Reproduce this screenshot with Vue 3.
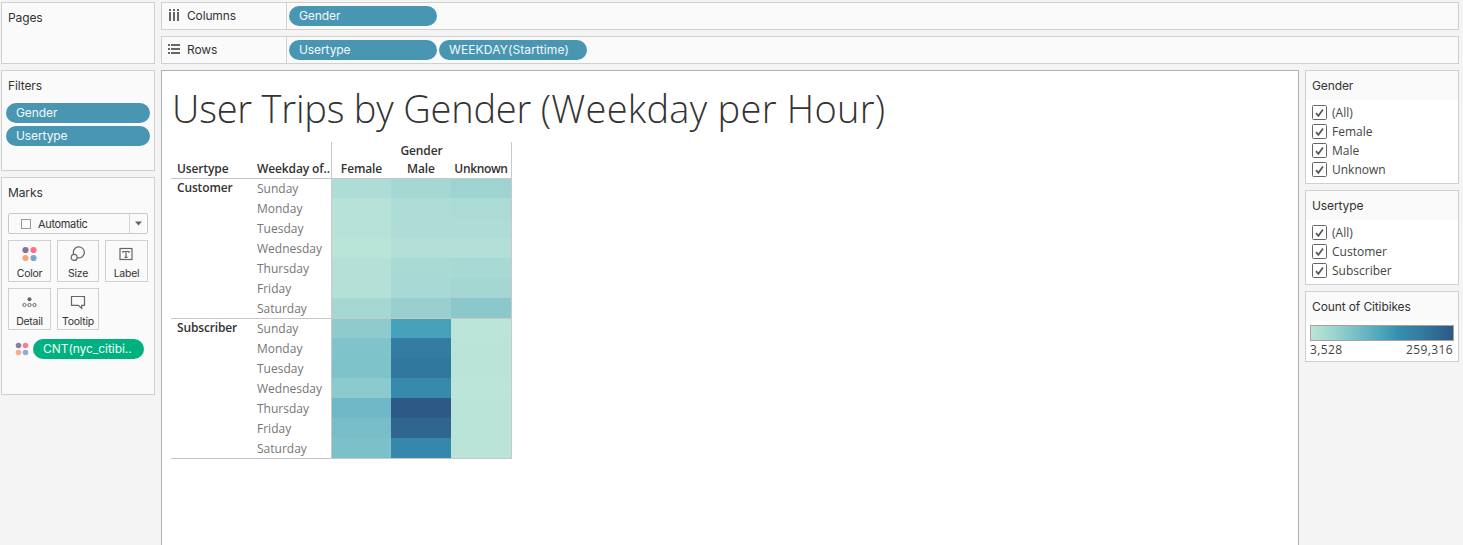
<script setup>
const marks = ['Color', 'Size', 'Label', 'Detail', 'Tooltip']
const days = ['Sunday', 'Monday', 'Tuesday', 'Wednesday', 'Thursday', 'Friday', 'Saturday']
const groups = [
  {
    name: 'Customer',
    rows: [
      ['#aedcd6', '#a5d8d3', '#9dd4d1'],
      ['#b7e2d8', '#aedcd6', '#acdbd5'],
      ['#b7e2d8', '#afdcd6', '#aedcd6'],
      ['#b9e4d8', '#b3dfd7', '#b3dfd7'],
      ['#b4e0d7', '#a9dad4', '#a8d9d4'],
      ['#b4e0d7', '#a8d9d4', '#a4d7d3'],
      ['#a5d8d3', '#99d0cf', '#8bc8cc']
    ]
  },
  {
    name: 'Subscriber',
    rows: [
      ['#8fcbcd', '#46a2bb', '#bbe5d9'],
      ['#80c3ca', '#347ca2', '#bae4d8'],
      ['#7fc3ca', '#32779e', '#bae4d8'],
      ['#8dcacd', '#368bac', '#bbe5d9'],
      ['#6fb8c7', '#2c5985', '#b9e4d7'],
      ['#78bec8', '#2f6690', '#b9e4d7'],
      ['#7cc0c9', '#3588ab', '#bae4d8']
    ]
  }
]
const filters = [
  { title: 'Gender', items: ['(All)', 'Female', 'Male', 'Unknown'] },
  { title: 'Usertype', items: ['(All)', 'Customer', 'Subscriber'] }
]
</script>

<template>
  <div class="app">
    <aside class="left">
      <section class="panel pages"><h3>Pages</h3></section>
      <section class="panel filters">
        <h3>Filters</h3>
        <div class="pill">Gender</div>
        <div class="pill">Usertype</div>
      </section>
      <section class="panel marks">
        <h3>Marks</h3>
        <div class="select">
          <i class="square"></i><span>Automatic</span>
          <b><svg width="7" height="5" viewBox="0 0 7 5"><path d="M0 .5h7L3.5 4.5z" fill="#666" /></svg></b>
        </div>
        <div class="buttons">
          <div v-for="m in marks" :key="m" class="mark">
            <svg width="24" height="20" viewBox="0.5 0 24 20" fill="none" stroke="#666" stroke-width="1.2">
              <g v-if="m === 'Color'" stroke="none">
                <circle cx="8" cy="6" r="3.1" fill="#86709c" /><circle cx="16" cy="6" r="3.1" fill="#ff6f83" />
                <circle cx="8" cy="14" r="3.1" fill="#f7a87a" /><circle cx="16" cy="14" r="3.1" fill="#7fa5cd" />
              </g>
              <g v-else-if="m === 'Size'">
                <path d="M8.2 10.4A5.5 5.5 0 1 1 11.6 13.6" /><circle cx="8.7" cy="13.4" r="3" />
              </g>
              <g v-else-if="m === 'Label'">
                <rect x="5.5" y="4.5" width="12" height="11" />
                <path d="M8.5 9V7.5h6V9M11.5 7.5v6M10 13.4h3" />
              </g>
              <g v-else-if="m === 'Detail'">
                <circle cx="12" cy="7.2" r="2" fill="#666" stroke="none" />
                <circle cx="7" cy="13" r="1.6" stroke-width="1" /><circle cx="12" cy="13" r="1.6" stroke-width="1" /><circle cx="17" cy="13" r="1.6" stroke-width="1" />
              </g>
              <path v-else d="M6 4.5h13v8.8h-2.8v3l-3.4-3H6z" />
            </svg>
            <span>{{ m }}</span>
          </div>
        </div>
        <div class="encoding">
          <svg width="14" height="14" viewBox="0 0 14 14">
            <circle cx="3.5" cy="3.5" r="2.8" fill="#8e7ba2" /><circle cx="10.5" cy="3.5" r="2.8" fill="#f87e8f" />
            <circle cx="3.5" cy="10.5" r="2.8" fill="#f5b08a" /><circle cx="10.5" cy="10.5" r="2.8" fill="#8dafd2" />
          </svg>
          <div class="pill green">CNT(nyc_citibi..</div>
        </div>
      </section>
    </aside>

    <main class="main">
      <div class="shelf">
        <div class="label">
          <svg width="12" height="14" viewBox="0 0 12 14" fill="#666">
            <path d="M1 0h2v2H1zM5 0h2v2H5zM9 0h2v2H9zM1 3h2v9H1zM5 3h2v9H5zM9 3h2v9H9z" />
          </svg>
          <span class="cols">Columns</span>
        </div>
        <div class="pill">Gender</div>
      </div>
      <div class="shelf">
        <div class="label">
          <svg width="12" height="14" viewBox="0 0 12 14" fill="#666">
            <path d="M0 1h2v2H0zM0 5h2v2H0zM0 9h2v2H0zM3 1h9v2H3zM3 5h9v2H3zM3 9h9v2H3z" />
          </svg>
          <span>Rows</span>
        </div>
        <div class="pill">Usertype</div>
        <div class="pill wk">WEEKDAY(Starttime)</div>
      </div>
      <div class="work">
        <div class="canvas">
          <h1><span class="tight">User Trips by Gender </span><span class="loose">(Weekday per Hour)</span></h1>
          <div class="table">
            <div class="thead">
              <div class="h1c">Usertype</div>
              <div class="h2c">Weekday of..</div>
              <div class="h3c">
                <div class="gender">Gender</div>
                <div class="names"><span>Female</span><span>Male</span><span class="unk">Unknown</span></div>
              </div>
            </div>
            <div v-for="g in groups" :key="g.name" class="group">
              <div class="gname">{{ g.name }}</div>
              <div class="days"><div v-for="d in days" :key="d">{{ d }}</div></div>
              <div class="heat">
                <div v-for="(r, i) in g.rows" :key="i" class="hrow">
                  <i v-for="(c, j) in r" :key="j" :style="{ background: c }"></i>
                </div>
              </div>
            </div>
          </div>
        </div>
        <aside class="right">
          <section v-for="f in filters" :key="f.title" class="card">
            <h3>{{ f.title }}</h3>
            <div class="list">
              <div v-for="t in f.items" :key="t" class="check">
                <svg width="15" height="15" viewBox="0 0 15 15" fill="none">
                  <rect x=".5" y=".5" width="14" height="14" rx="1" stroke="#666" />
                  <path d="M4 8.2l2.4 2.6L11 4.6" stroke="#555" stroke-width="1.7" />
                </svg>
                <span>{{ t }}</span>
              </div>
            </div>
          </section>
          <section class="card legend">
            <h3>Count of Citibikes</h3>
            <div class="bar"></div>
            <div class="range"><span>3,528</span><span>259,316</span></div>
          </section>
        </aside>
      </div>
    </main>
  </div>
</template>

<style>
body { margin: 0; overflow: hidden; background: #f4f4f4; }
</style>
<style scoped>
* { box-sizing: border-box; }
.app { display: flex; height: 545px; overflow: hidden; padding: 2px 4px 0 1px; gap: 6px; background: #f4f4f4; color: #333; font: 12px/20px "Inter", sans-serif; white-space: nowrap; }
.left { width: 154px; flex: none; }
h3 { margin: 0; font-weight: 400; font-size: 12px; line-height: 30px; padding-left: 6px; letter-spacing: -.12px; }
.panel { border: 1px solid #d0d0d0; background: #fafafa; }
.pages { height: 62px; margin-bottom: 6px; }
.filters { height: 101px; margin-bottom: 6px; }
.filters .pill { width: 144px; margin: 2px 0 3px 4px; }
.marks { height: 218px; }
.pill { height: 20px; width: 148px; flex: none; border-radius: 10px; background: #4996b2; color: #f4fafc; padding-left: 10px; line-height: 19px; letter-spacing: -.1px; }
.wk { letter-spacing: .12px; }
.green { background: #00b180; width: 111px; letter-spacing: -.05px; }
.select { display: flex; align-items: center; width: 140px; height: 21px; margin: 5px 0 6px 6px; border: 1px solid #c9c9c9; border-radius: 2px; padding-left: 12px; font-size: 11px; letter-spacing: -.35px; }
.square { width: 10px; height: 10px; border: 1px solid #999; margin-right: 7px; }
.select b { margin-left: auto; width: 18px; height: 19px; border-left: 1px solid #d4d4d4; display: flex; align-items: center; justify-content: center; }
.buttons { display: grid; grid-template-columns: 43px 42px 43px; gap: 6px; margin-left: 6px; }
.mark { height: 42px; border: 1px solid #d0d0d0; display: flex; flex-direction: column; align-items: center; padding-top: 3px; font-size: 10.5px; line-height: 20px; letter-spacing: -.25px; }
.mark svg { display: block; flex: none; }
.encoding { display: flex; align-items: center; gap: 4px; margin: 9px 0 0 13px; }
.main { flex: 1; min-width: 0; display: flex; flex-direction: column; gap: 6px; }
.shelf { height: 28px; flex: none; display: flex; align-items: center; gap: 2px; border: 1px solid #d0d0d0; background: #fafafa; }
.label { width: 125px; height: 26px; border-right: 1px solid #d0d0d0; display: flex; align-items: center; gap: 7px; padding-left: 6px; letter-spacing: -.15px; }
.work { display: flex; gap: 6px; flex: 1; }
.canvas { width: 1138px; flex: none; background: #fff; border: 1px solid #b0b0b0; border-bottom: 0; padding-left: 9px; }
h1 { margin: 0; height: 71px; padding-left: 1px; font: 300 38px/74px "Open Sans", sans-serif; white-space: pre; }
.tight { letter-spacing: -.2px; }
.loose { letter-spacing: .27px; }
.table { width: 341px; font-family: "Open Sans", sans-serif; font-size: 12px; }
.thead { display: flex; height: 36px; font-weight: 600; color: #333; letter-spacing: -.12px; }
.h1c { width: 80px; padding: 17px 0 0 6px; }
.h2c { width: 80px; padding: 17px 0 0 6px; }
.h3c { flex: 1; border: 1px solid #c8c8c8; border-width: 0 1px; text-align: center; }
.gender { height: 18px; line-height: 18px; }
.names { display: grid; grid-template-columns: 59px 60px 60px; line-height: 18px; }
.unk { letter-spacing: -.35px; }
.group { display: flex; height: 140px; border-top: 1px solid #c8c8c8; }
.group:last-child { height: 141px; border-bottom: 1px solid #c8c8c8; }
.gname { width: 86px; padding-left: 6px; font-weight: 600; line-height: 18px; letter-spacing: -.15px; }
.days { width: 74px; color: #767676; line-height: 20px; }
.heat { flex: 1; border: 1px solid #c8c8c8; border-width: 0 1px; }
.hrow { height: 20px; display: grid; grid-template-columns: 59px 60px 60px; }
.hrow:first-child { height: 19px; }
.right { width: 154px; display: flex; flex-direction: column; gap: 6px; }
.card { border: 1px solid #d0d0d0; background: #fff; }
.card h3 { background: #fafafa; height: 29px; line-height: 30px; }
.list { padding: 3px 0 4px 6px; font-family: "Open Sans", sans-serif; color: #444; }
.check { height: 19px; display: flex; align-items: center; gap: 5px; }
.legend { height: 71px; }
.bar { height: 16px; margin: 4px 4px 0; border: 1px solid #a9a497; background: linear-gradient(90deg, #bce4d8, #9ad3d0 17%, #70b9c6 35%, #45a2b9 52%, #3590b0 61%, #347ba1 77%, #2c5985); }
.range { display: flex; justify-content: space-between; padding: 0 5px 0 4px; font-family: "Open Sans", sans-serif; line-height: 18px; color: #444; letter-spacing: .4px; }
</style>
